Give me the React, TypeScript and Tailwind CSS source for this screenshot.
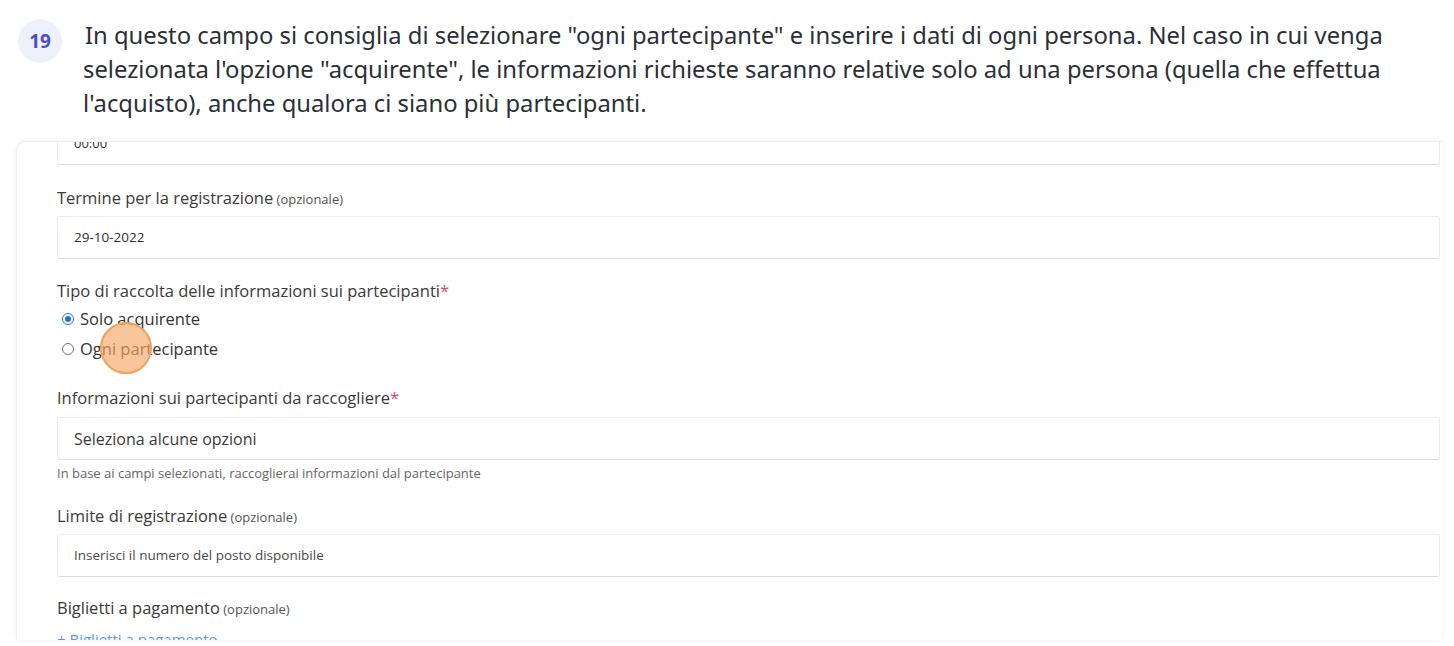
import React from 'react';

const formFont = { fontFamily: '"Open Sans", "Liberation Sans", sans-serif' };

function Label({ text, optional, required }: { text: string; optional?: boolean; required?: boolean }) {
    return (
        <p className="text-[16.5px] text-[#3a3a3a] leading-5">
            {text}
            {optional && <span className="text-[13px] text-[#555]"> (opzionale)</span>}
            {required && <span className="text-[#e0457b]">*</span>}
        </p>
    );
}

function Field({ children, className = '' }: { children: React.ReactNode; className?: string }) {
    return (
        <div className={`h-[43px] flex items-center px-4 bg-white border border-[#ececec] border-b-[#dcdcdc] rounded-[3px] ${className}`}>
            {children}
        </div>
    );
}

function Radio({ checked, label }: { checked?: boolean; label: string }) {
    return (
        <div className="flex items-center gap-[6px] h-[30px]">
            {checked ? (
                <span className="w-[12px] h-[12px] rounded-full border border-[#1a73e8] flex items-center justify-center">
                    <span className="w-[6px] h-[6px] rounded-full bg-[#1a73e8]"></span>
                </span>
            ) : (
                <span className="w-[12px] h-[12px] rounded-full border border-[#777] bg-white"></span>
            )}
            <span className="text-[16.5px] text-[#333]">{label}</span>
        </div>
    );
}

export default function App() {
    return (
        <div className="w-[1454px] h-[646px] overflow-hidden bg-white relative">
            <div className="flex items-start pl-[18px] pt-[19px] pr-4" style={{ fontFamily: '"Noto Sans", "Liberation Sans", sans-serif' }}>
                <div className="w-[44px] h-[44px] shrink-0 rounded-full bg-[#eef0fb] flex items-center justify-center text-[19px] font-bold text-[#4b4fc7]">
                    19
                </div>
                <p className="ml-[23px] -mt-[1px] text-[23.8px] leading-[34px] text-[#2b2f36] whitespace-nowrap">
                    In questo campo si consiglia di selezionare "ogni partecipante" e inserire i dati di ogni persona. Nel caso in cui venga
                    <br />
                    <span className="-ml-[2px]">selezionata l'opzione "acquirente", le informazioni richieste saranno relative solo ad una persona (quella che effettua</span>
                    <br />
                    <span className="-ml-[2px]">l'acquisto), anche qualora ci siano più partecipanti.</span>
                </p>
            </div>

            <div className="absolute left-[16px] top-[141px] w-[1426px] h-[499px] overflow-hidden rounded-tl-[10px] border-t border-l border-[#eeeeee] shadow-[0_0_6px_rgba(0,0,0,0.06)]" style={formFont}>
                <div className="pl-[40px] pr-[2px]">
                    <Field className="-mt-[20px]">
                        <span className="text-[13px] font-medium text-[#333]">00:00</span>
                    </Field>

                    <div className="mt-[23px]">
                        <Label text="Termine per la registrazione" optional />
                    </div>
                    <Field className="mt-[7px]">
                        <span className="text-[13.5px] font-medium text-[#2f2f2f]">29-10-2022</span>
                    </Field>

                    <div className="mt-[22px]">
                        <Label text="Tipo di raccolta delle informazioni sui partecipanti" required />
                    </div>
                    <div className="pl-[5px] mt-[3px]">
                        <Radio checked label="Solo acquirente" />
                        <Radio label="Ogni partecipante" />
                    </div>

                    <div className="mt-[24px]">
                        <Label text="Informazioni sui partecipanti da raccogliere" required />
                    </div>
                    <Field className="mt-[9px] h-[42px]">
                        <span className="text-[16px] font-medium text-[#3a3a3a]">Seleziona alcune opzioni</span>
                    </Field>
                    <p className="mt-[5px] text-[13px] leading-4 text-[#666]">In base ai campi selezionati, raccoglierai informazioni dal partecipante</p>

                    <div className="mt-[25px]">
                        <Label text="Limite di registrazione" optional />
                    </div>
                    <Field className="mt-[7px] h-[42px]">
                        <span className="text-[13.5px] font-medium text-[#4a4a4a]">Inserisci il numero del posto disponibile</span>
                    </Field>

                    <div className="mt-[21px]">
                        <Label text="Biglietti a pagamento" optional />
                    </div>
                    <p className="mt-[10px] text-[15px] leading-5 text-[#5b9bdc]">+ Biglietti a pagamento</p>
                </div>
            </div>

            <div className="absolute left-[100px] top-[322px] w-[52px] h-[52px] rounded-full bg-[#f6a865]/65 border-2 border-[#f0a060]"></div>
        </div>
    );
}
